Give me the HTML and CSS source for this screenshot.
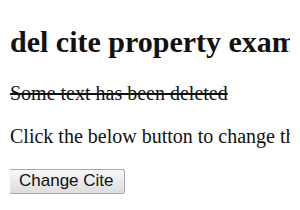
FILE: index.html
```html
<!DOCTYPE html>
<html lang="en">
<head>
    <meta charset="UTF-8">
    <title>del cite property</title>
    <link rel="stylesheet" href="styles.css">
</head>
<body>
    <h2>del cite property example</h2>
    <p><del id="myDel" cite="https://example.com/deleted.html">Some text has been deleted</del></p>
    <p>Click the below button to change the cite attribute value</p>
    <button class="cite-btn" onclick="changeCite()">Change Cite</button>
    <p id="sample"></p>

    <script>
        function changeCite() {
            document.getElementById("myDel").cite = "https://example.com/changed.html";
            document.getElementById("sample").innerHTML = "The cite attribute value has been changed";
        }
    </script>
</body>
</html>
```

FILE: styles.css
```css
body {
    font-family: 'Liberation Serif', serif;
    font-size: 20px;
    margin: 10px;
    color: #111;
    background: #fff;
    white-space: nowrap;
    overflow: hidden;
}

h2 {
    font-size: 30px;
    margin: 15px 0 23px;
}

p {
    margin: 20px 0;
}

.cite-btn {
    font-family: 'Liberation Sans', Arial, sans-serif;
    font-size: 17px;
    color: #111;
    height: 25px;
    margin-left: -2px;
    padding: 0 10px;
    border: 1px solid #a9a9a9;
    border-radius: 2px;
    background: linear-gradient(#f7f7f7, #dddddd);
}
```
